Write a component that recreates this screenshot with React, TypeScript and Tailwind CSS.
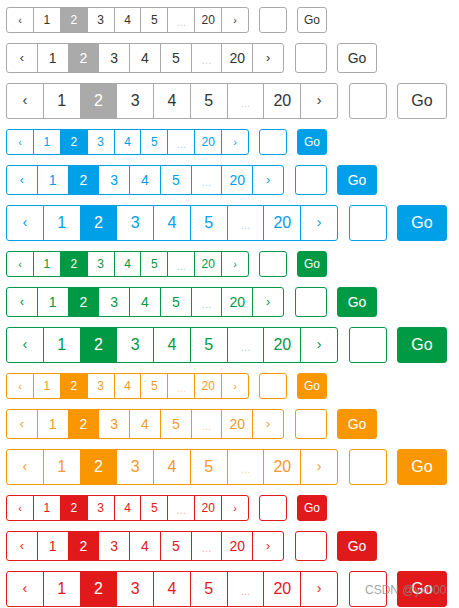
import React from "react";

type SizeName = "sm" | "md" | "lg";

interface Theme {
  border: string;
  text: string;
  active: string;
  dots: string;
  go: string;
}

interface Size {
  height: string;
  pager: string;
  font: string;
  input: string;
  go: string;
  gapInput: string;
}

const themes: Theme[] = [
  {
    border: "border-[#aaaaaa]",
    text: "text-[#333333]",
    active: "bg-[#aaaaaa] text-white",
    dots: "text-[#cccccc]",
    go: "bg-white border-[#aaaaaa] text-[#333333]",
  },
  {
    border: "border-[#00a0e9]",
    text: "text-[#00a0e9]",
    active: "bg-[#00a0e9] text-white",
    dots: "text-[#99d9f6]",
    go: "bg-[#00a0e9] border-[#00a0e9] text-white",
  },
  {
    border: "border-[#009944]",
    text: "text-[#009944]",
    active: "bg-[#009944] text-white",
    dots: "text-[#99d6b4]",
    go: "bg-[#009944] border-[#009944] text-white",
  },
  {
    border: "border-[#fa9600]",
    text: "text-[#f59a2a]",
    active: "bg-[#fa9600] text-white",
    dots: "text-[#fdd599]",
    go: "bg-[#fa9600] border-[#fa9600] text-white",
  },
  {
    border: "border-[#e2191b]",
    text: "text-[#e2191b]",
    active: "bg-[#e2191b] text-white",
    dots: "text-[#f3a3a4]",
    go: "bg-[#e2191b] border-[#e2191b] text-white",
  },
];

const sizes: Record<SizeName, Size> = {
  sm: {
    height: "h-[26px]",
    pager: "w-[243px]",
    font: "text-[12px]",
    input: "w-[28px]",
    go: "w-[30px]",
    gapInput: "ml-[10px]",
  },
  md: {
    height: "h-[30px]",
    pager: "w-[278px]",
    font: "text-[14px]",
    input: "w-[32px]",
    go: "w-[40px]",
    gapInput: "ml-[11px]",
  },
  lg: {
    height: "h-[36px]",
    pager: "w-[332px]",
    font: "text-[16px]",
    input: "w-[38px]",
    go: "w-[50px]",
    gapInput: "ml-[11px]",
  },
};

const pages = ["‹", "1", "2", "3", "4", "5", "...", "20", "›"];

function Pager({ theme, size }: { theme: Theme; size: Size }) {
  return (
    <div className={`flex items-center ${size.height}`}>
      <div className={`flex h-full border rounded-[3px] overflow-hidden ${size.pager} ${theme.border}`}>
        {pages.map((p, i) => {
          const isActive = p === "2";
          const isDots = p === "...";
          const isArrow = p === "‹" || p === "›";
          let color = theme.text;
          if (isActive) color = theme.active;
          if (isDots) color = theme.dots;
          return (
            <div
              key={i}
              className={`flex-1 flex items-center justify-center h-full ${size.font} ${color} ${
                i > 0 ? "border-l " + theme.border : ""
              }`}
            >
              <span className={isDots ? "text-[10px] pt-[4px]" : isArrow ? "text-[0.9em]" : ""}>
                {isDots ? "…" : p}
              </span>
            </div>
          );
        })}
      </div>
      <input
        type="text"
        className={`h-full border rounded-[3px] bg-white outline-none ${size.gapInput} ${size.input} ${theme.border}`}
      />
      <button
        className={`h-full ml-[10px] border rounded-[3px] flex items-center justify-center ${size.go} ${size.font} ${theme.go}`}
      >
        Go
      </button>
    </div>
  );
}

export default function App() {
  return (
    <div
      className="relative w-[459px] h-[608px] bg-white pt-[7px] pl-[6px] flex flex-col gap-[10px]"
      style={{ fontFamily: '"Liberation Sans", Arial, sans-serif' }}
    >
      {themes.map((theme, t) =>
        (["sm", "md", "lg"] as SizeName[]).map((s) => (
          <Pager key={`${t}-${s}`} theme={theme} size={sizes[s]} />
        ))
      )}
      <div className="absolute left-[365px] top-[581px] text-[12px] text-[#8a8a8a]/80 whitespace-nowrap pointer-events-none">
        CSDN @yx000
      </div>
    </div>
  );
}
